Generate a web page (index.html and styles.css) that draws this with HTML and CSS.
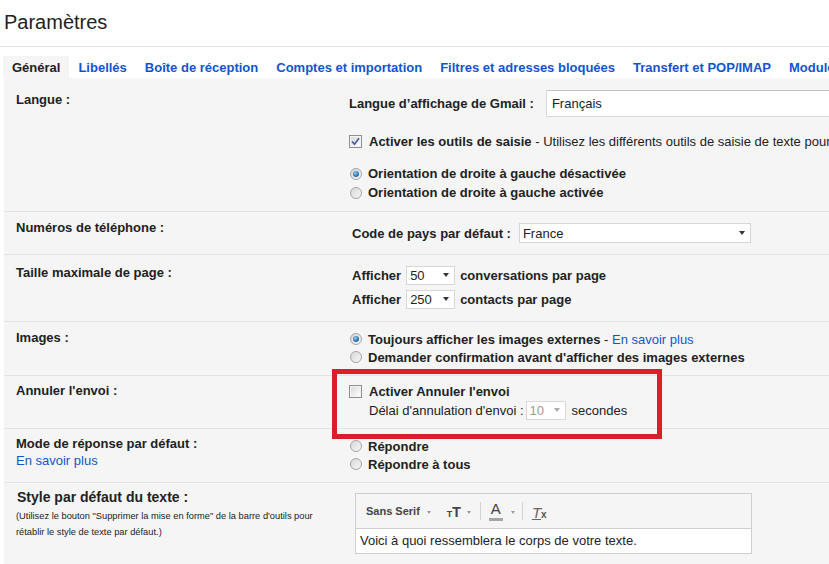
FILE: index.html
```html
<!DOCTYPE html>
<html lang="fr">
<head>
<meta charset="utf-8">
<title>Paramètres</title>
<link rel="stylesheet" href="styles.css">
</head>
<body>
<div class="page">
  <h1 class="title">Paramètres</h1>
  <nav class="tabs">
    <span class="tab active">Général</span>
    <a class="tab">Libellés</a>
    <a class="tab">Boîte de réception</a>
    <a class="tab">Comptes et importation</a>
    <a class="tab">Filtres et adresses bloquées</a>
    <a class="tab">Transfert et POP/IMAP</a>
    <a class="tab">Modules</a>
  </nav>

  <div class="settings">
    <div class="row row-lang">
      <div class="label">Langue :</div>
      <div class="value">
        <div class="lang-line"><b>Langue d’affichage de Gmail :</b><span class="textbox">Français</span></div>
        <div class="check-line"><span class="cb checked"><svg viewBox="0 0 11 11" width="11" height="11"><polyline points="2,5.5 4.5,8.2 9,2.3" fill="none" stroke="#4b5f9e" stroke-width="1.8"/></svg></span><span><b>Activer les outils de saisie</b> - Utilisez les différents outils de saisie de texte pour</span></div>
        <div class="radios tall">
          <div class="rline"><span class="radio on"></span><b>Orientation de droite à gauche désactivée</b></div>
          <div class="rline"><span class="radio"></span><b>Orientation de droite à gauche activée</b></div>
        </div>
      </div>
    </div>

    <div class="row row-phone">
      <div class="label">Numéros de téléphone :</div>
      <div class="value">
        <div class="sel-line"><b>Code de pays par défaut :</b><span class="select wide"><span>France</span><i class="arrow"></i></span></div>
      </div>
    </div>

    <div class="row row-size">
      <div class="label">Taille maximale de page :</div>
      <div class="value">
        <div class="size-line"><b>Afficher</b><span class="select small"><span>50</span><i class="arrow"></i></span><b>conversations par page</b></div>
        <div class="size-line"><b>Afficher</b><span class="select small"><span>250</span><i class="arrow"></i></span><b>contacts par page</b></div>
      </div>
    </div>

    <div class="row row-images">
      <div class="label">Images :</div>
      <div class="value">
        <div class="rline"><span class="radio on"></span><span><b>Toujours afficher les images externes</b> - <a class="link">En savoir plus</a></span></div>
        <div class="rline"><span class="radio"></span><b>Demander confirmation avant d'afficher des images externes</b></div>
      </div>
    </div>

    <div class="row row-undo">
      <div class="label">Annuler l'envoi :</div>
      <div class="value">
        <div class="undo-line"><span class="cb"></span><b>Activer Annuler l'envoi</b></div>
        <div class="delay-line"><span>Délai d'annulation d'envoi :</span><span class="select tiny disabled"><span>10</span><i class="arrow"></i></span><span>secondes</span></div>
      </div>
    </div>

    <div class="row row-reply">
      <div class="label">Mode de réponse par défaut :<br><a class="link normal">En savoir plus</a></div>
      <div class="value">
        <div class="rline"><span class="radio"></span><b>Répondre</b></div>
        <div class="rline"><span class="radio"></span><b>Répondre à tous</b></div>
      </div>
    </div>

    <div class="row row-style">
      <div class="label">
        <div class="style-title">Style par défaut du texte :</div>
        <div class="style-note">(Utilisez le bouton "Supprimer la mise en forme" de la barre d'outils pour<br>rétablir le style de texte par défaut.)</div>
      </div>
      <div class="value">
        <div class="editor">
          <div class="toolbar">
            <span class="font-name">Sans Serif</span>
            <i class="tarrow a1"></i>
            <span class="ico-size"><span class="t-small">T</span><span class="t-big">T</span></span>
            <i class="tarrow a2"></i>
            <span class="tsep s1"></span>
            <span class="ico-color"><span class="ca">A</span><span class="cbar"></span></span>
            <i class="tarrow a3"></i>
            <span class="tsep s2"></span>
            <span class="ico-clear"><span class="ct">T</span><span class="cx">x</span></span>
          </div>
          <div class="editor-body">Voici à quoi ressemblera le corps de votre texte.</div>
        </div>
      </div>
    </div>
  </div>

  <div class="annotation"></div>
</div>
</body>
</html>
```

FILE: styles.css
```css
html, body {
  margin: 0;
  padding: 0;
  overflow: hidden;
  background: #fff;
}

body {
  font-family: "Liberation Sans", Arial, sans-serif;
  font-size: 13px;
  color: #222;
}

.page {
  position: relative;
  width: 1100px;
}

.title {
  margin: 0;
  padding: 10px 0 12px 4px;
  font-size: 20px;
  line-height: 24px;
  font-weight: normal;
  color: #222;
  border-bottom: 1px solid #e5e5e5;
}

.tabs {
  display: flex;
  margin: 9px 0 0 3px;
  white-space: nowrap;
}

.tab {
  padding: 1px 9px 0;
  height: 22px;
  box-sizing: border-box;
  line-height: 22px;
  font-weight: bold;
  color: #15c;
}

.tab.active {
  background: #f5f5f5;
  color: #222;
}

.settings {
  margin-left: 4px;
  background: #f5f5f5;
}

.row {
  display: grid;
  grid-template-columns: 333px 1fr;
  padding-left: 12px;
  border-bottom: 1px solid #e4e4e4;
}

.label {
  font-weight: bold;
  line-height: 18px;
}

.value {
  white-space: nowrap;
}

.link {
  color: #15c;
  font-weight: normal;
}

/* controls */
.cb {
  display: inline-block;
  box-sizing: border-box;
  width: 13px;
  height: 13px;
  border: 1px solid #8f8f8f;
  background: linear-gradient(135deg, #d6d6d6 0%, #f4f4f4 70%, #fff 100%);
  box-shadow: inset 0 0 0 1px #f4f4f4;
  margin-right: 7px;
  flex: none;
  position: relative;
}

.cb svg {
  display: block;
  position: absolute;
  left: 0;
  top: 0;
}

.radio {
  display: inline-block;
  box-sizing: border-box;
  width: 12px;
  height: 12px;
  border-radius: 50%;
  border: 1px solid #a4a4a4;
  background: linear-gradient(135deg, #d8d8d8, #f7f7f7);
  margin: 0 6px 0 1px;
  flex: none;
  position: relative;
}

.radio.on::after {
  content: "";
  position: absolute;
  left: 2px;
  top: 2px;
  width: 6px;
  height: 6px;
  border-radius: 50%;
  background: radial-gradient(circle at 40% 35%, #9fd0f3 0%, #2e74b0 55%, #1b4f86 100%);
}

.select {
  display: inline-flex;
  align-items: center;
  justify-content: space-between;
  box-sizing: border-box;
  background: #fff;
  border: 1px solid #d6d6d6;
  font-weight: normal;
  color: #222;
  padding: 0 5px 0 3px;
}

.select .arrow {
  width: 0;
  height: 0;
  border-top: 4px solid #333;
  border-left: 3.5px solid transparent;
  border-right: 3.5px solid transparent;
}

.select.wide {
  width: 232px;
  height: 20px;
  margin-left: 8px;
}

.select.small {
  width: 49px;
  height: 19px;
  margin: 0 5px;
}

.select.tiny {
  width: 40px;
  height: 19px;
  margin: 0 6px 0 2px;
}

.select.disabled {
  color: #9a9a9a;
  border-color: #d9d9d9;
}

.select.disabled .arrow {
  border-top-color: #aaa;
}

.textbox {
  display: inline-flex;
  align-items: center;
  box-sizing: border-box;
  width: 340px;
  height: 27px;
  margin-left: 12px;
  padding-left: 5px;
  background: #fff;
  border: 1px solid #d9d9d9;
  border-top-color: #c4c4c4;
  font-weight: normal;
}

/* row 1 */
.row-lang .label { padding-top: 13px; }
.row-lang .value { padding: 12px 0 9px; }

.lang-line {
  display: flex;
  align-items: center;
  height: 27px;
}

.check-line {
  display: flex;
  align-items: center;
  height: 18px;
  margin-top: 15px;
}

.radios.tall {
  margin-top: 14px;
}

.rline {
  display: flex;
  align-items: center;
  height: 18px;
}

.radios.tall .rline {
  height: 19px;
}

/* row 2 */
.row-phone .label { padding-top: 7px; }
.row-phone .value { padding: 11px 0 11px 3px; }

.sel-line {
  display: flex;
  align-items: center;
  height: 20px;
}

/* row 3 */
.row-size .label { padding-top: 9px; }
.row-size .value { padding: 8px 0 10px 3px; }

.size-line {
  display: flex;
  align-items: center;
  height: 24px;
}

/* row 4 */
.row-images .label { padding-top: 7px; }
.row-images .value { padding: 8px 0 9px; }

/* row 5 */
.row-undo .label { padding-top: 6px; }
.row-undo .value { padding: 7px 0 8px; }

.undo-line {
  display: flex;
  align-items: center;
  height: 17px;
}

.delay-line {
  display: flex;
  align-items: center;
  height: 20px;
  padding-left: 20px;
}

/* row 6 */
.row-reply .label {
  padding-top: 6px;
  line-height: 17px;
}
.row-reply .value { padding: 8px 0 9px; }

/* row 7 */
.row-style {
  border-bottom: none;
  padding-bottom: 11px;
}

.row-style .label {
  padding-top: 5px;
  font-weight: normal;
}

.style-title {
  font-size: 14px;
  font-weight: bold;
  line-height: 18px;
  padding-left: 1px;
}

.style-note {
  margin-top: 2px;
  font-size: 9.3px;
  line-height: 16px;
  white-space: nowrap;
}

.row-style .value { padding-top: 10px; }

.editor {
  width: 397px;
  margin-left: 6px;
  border: 1px solid #cfcfcf;
  box-sizing: border-box;
}

.toolbar {
  display: flex;
  align-items: center;
  height: 34px;
  padding-left: 10px;
  background: #f5f5f5;
  border-bottom: 1px solid #cfcfcf;
  color: #444;
}

.font-name {
  font-size: 11px;
  font-weight: bold;
  color: #444;
}

.tarrow {
  width: 0;
  height: 0;
  border-top: 3px solid #999;
  border-left: 2.5px solid transparent;
  border-right: 2.5px solid transparent;
  margin-top: 2px;
}

.tarrow.a1 { margin-left: 7px; }
.tarrow.a2 { margin-left: 6px; }
.tarrow.a3 { margin-left: 8px; }

.ico-size {
  display: inline-flex;
  align-items: baseline;
  margin-left: 16px;
  font-weight: bold;
  color: #444;
  line-height: 14px;
  margin-top: 3px;
}

.t-small { font-size: 9px; }
.t-big { font-size: 14px; margin-left: 0; }

.tsep {
  width: 1px;
  height: 18px;
  background: #d4d4d4;
}

.tsep.s1 { margin-left: 9px; }
.tsep.s2 { margin-left: 7px; }

.ico-color {
  display: inline-flex;
  flex-direction: column;
  align-items: center;
  margin-left: 8px;
  width: 14px;
}

.ca {
  font-size: 15px;
  line-height: 14px;
  color: #444;
}

.cbar {
  width: 14px;
  height: 3px;
  margin-top: 2px;
  background: #a6a6a6;
}

.ico-clear {
  display: inline-flex;
  align-items: flex-end;
  margin-left: 9px;
  margin-top: 2px;
}

.ct {
  font-size: 15px;
  font-style: italic;
  line-height: 13px;
  color: #666;
  text-decoration: underline;
}

.cx {
  font-size: 10px;
  font-weight: bold;
  line-height: 9px;
  color: #555;
  margin-left: 0;
}

.editor-body {
  height: 24px;
  line-height: 24px;
  padding-left: 4px;
  background: #fff;
  white-space: nowrap;
}

/* red highlight annotation drawn over the screenshot */
.annotation {
  position: absolute;
  left: 332px;
  top: 369px;
  width: 330px;
  height: 70px;
  box-sizing: border-box;
  border: 5px solid #da1f2b;
  pointer-events: none;
}
```
